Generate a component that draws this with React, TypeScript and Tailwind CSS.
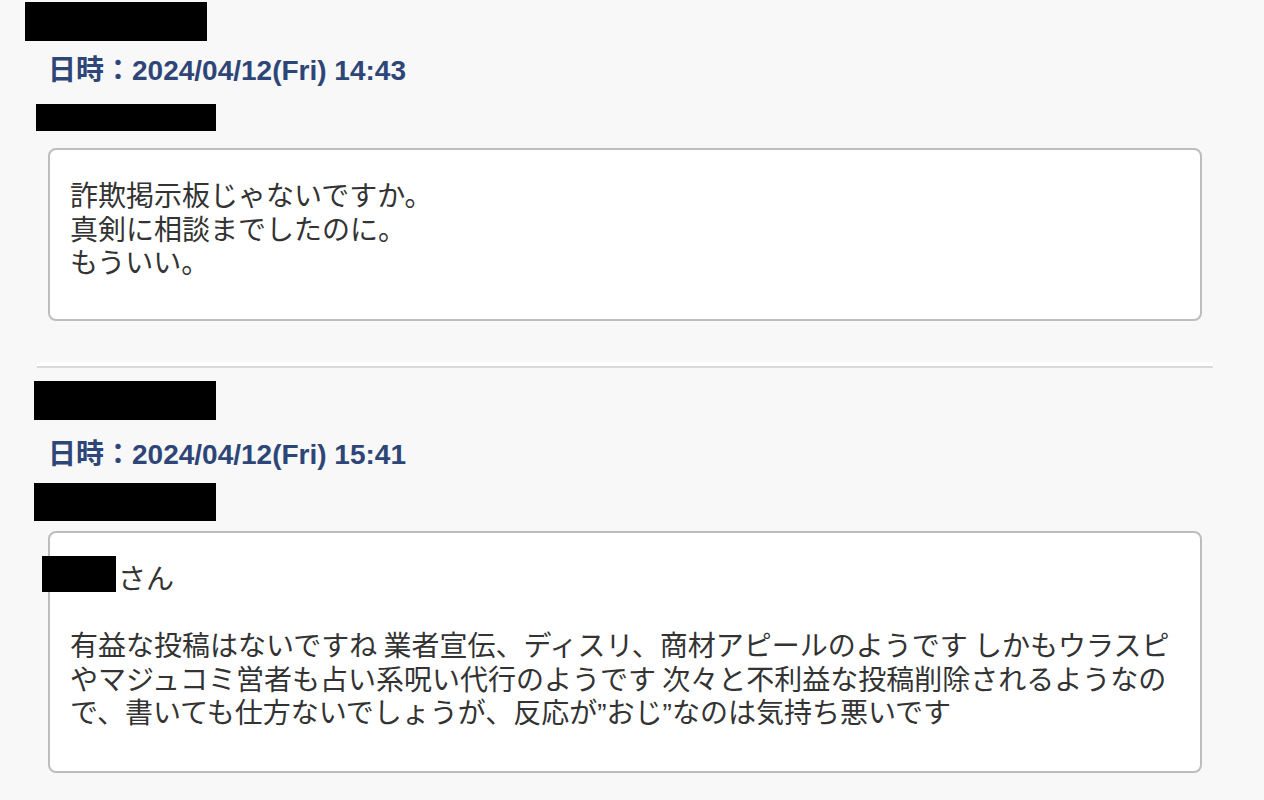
import React from "react";

const bodyFont = {
  fontFamily: '"Noto Sans CJK JP", "Noto Sans", sans-serif',
};
const dateFont = {
  fontFamily: '"Liberation Sans", "Noto Sans CJK JP", sans-serif',
};

function DateLine({ text, className }: { text: string; className: string }) {
  return (
    <div
      className={`ml-[48px] h-[30px] leading-[30px] text-[28px] font-bold text-[#2d4677] ${className}`}
      style={dateFont}
    >
      {text}
    </div>
  );
}

const Q = ({ c }: { c: string }) => (
  <span style={{ fontFamily: '"Liberation Sans", sans-serif' }}>{c}</span>
);

export default function App() {
  return (
    <div className="min-h-screen w-[1264px] bg-[#f8f8f8] pt-[2px] text-[#333333]" style={bodyFont}>
      {/* Post 1 */}
      <div className="ml-[25px] h-[39px] w-[182px] bg-black" />
      <DateLine text="日時：2024/04/12(Fri) 14:43" className="mt-[15px]" />
      <div className="ml-[36px] mt-[18px] h-[27px] w-[180px] bg-black" />
      <div className="ml-[48px] mt-[17px] w-[1154px] rounded-[8px] border-2 border-[#bdbdbd] bg-white pl-[20px] pr-[20px] pt-[28px] pb-[40px] text-[28px] leading-[33.6px]">
        詐欺掲示板じゃないですか。
        <br />
        真剣に相談までしたのに。
        <br />
        もういい。
      </div>

      {/* Separator */}
      <div className="ml-[37px] mt-[41px] w-[1176px] border-t-[4px] border-b-[2px] border-t-white border-b-[#dadada]" />

      {/* Post 2 */}
      <div className="ml-[34px] mt-[13px] h-[39px] w-[182px] bg-black" />
      <DateLine text="日時：2024/04/12(Fri) 15:41" className="mt-[20px]" />
      <div className="ml-[34px] mt-[13px] h-[38px] w-[182px] bg-black" />
      <div className="ml-[48px] mt-[10px] w-[1154px] rounded-[8px] border-2 border-[#bdbdbd] bg-white pl-[20px] pr-[20px] pt-[28px] pb-[40px] text-[28px] leading-[33.6px]">
        <span className="ml-[-28px] mt-[-4.7px] inline-block h-[36px] w-[74px] bg-black align-top" />
        <span className="ml-[2px]">さん</span>
        <br />
        <br />
        有益な投稿はないですね 業者宣伝、ディスリ、商材アピールのようです しかもウラスピ
        <br />
        やマジュコミ営者も占い系呪い代行のようです 次々と不利益な投稿削除されるようなの
        <br />
        で、書いても仕方ないでしょうが、反応が<Q c="”" />おじ<Q c="”" />なのは気持ち悪いです
      </div>
      <div className="h-[29px]" />
    </div>
  );
}
